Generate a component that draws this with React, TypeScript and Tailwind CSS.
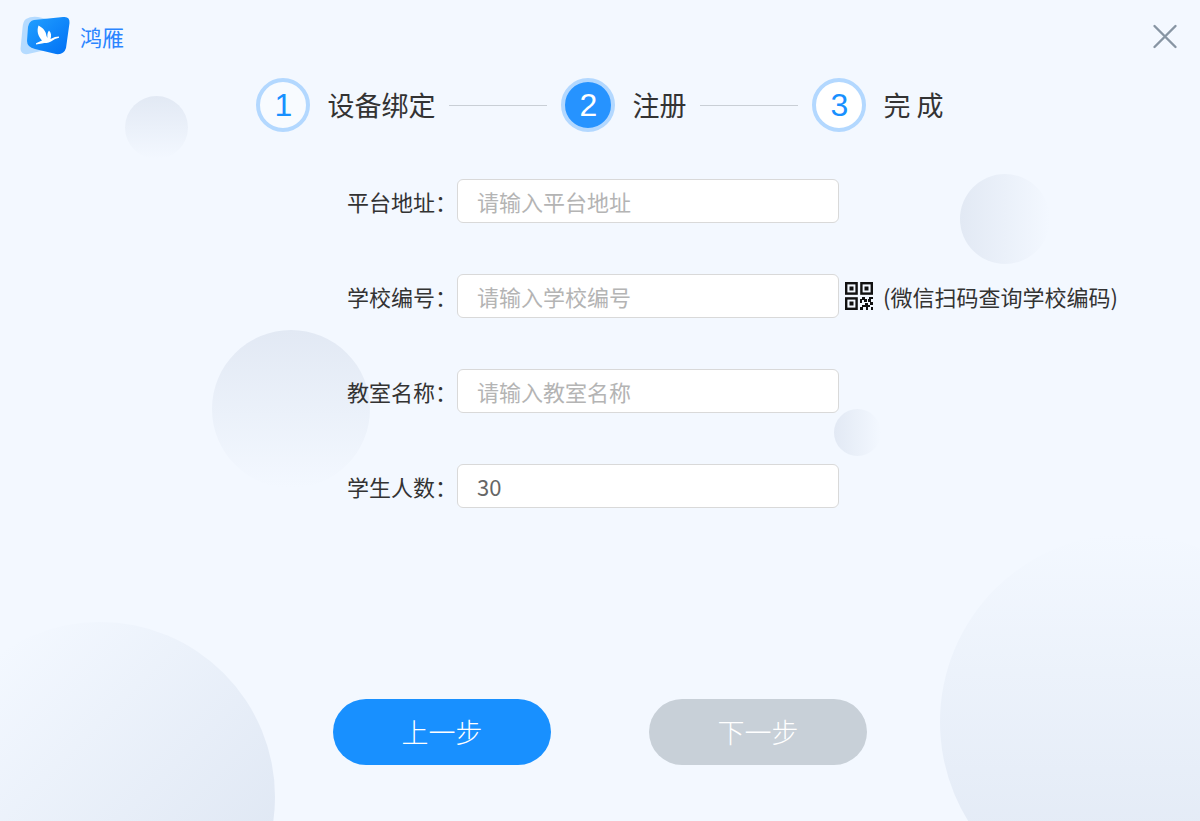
import { Fragment, useState } from 'react'
import clsx from 'clsx'

type Step = { no: number; title: string }

type Field = {
  id: string
  label: string
  placeholder: string
  value: string
  hint?: string
}

const STEPS: Step[] = [
  { no: 1, title: '设备绑定' },
  { no: 2, title: '注册' },
  { no: 3, title: '完 成' },
]

const CURRENT_STEP = 2

const FIELDS: Field[] = [
  { id: 'platform', label: '平台地址', placeholder: '请输入平台地址', value: '' },
  { id: 'school', label: '学校编号', placeholder: '请输入学校编号', value: '', hint: '(微信扫码查询学校编码)' },
  { id: 'classroom', label: '教室名称', placeholder: '请输入教室名称', value: '' },
  { id: 'students', label: '学生人数', placeholder: '请输入学生人数', value: '30' },
]

function Logo() {
  return (
    <svg width="50" height="40" viewBox="0 0 50 40" aria-hidden="true">
      <defs>
        <linearGradient id="logo-bg" x1="0" y1="0" x2="1" y2="1">
          <stop offset="0" stopColor="#22a0ff" />
          <stop offset="1" stopColor="#0070f5" />
        </linearGradient>
      </defs>
      <path d="M6 3 Q11 0 18 1 L36 5 L30 33 L8 38 Q1 39 0.500 33 L2.500 12 Q3 5 6 3Z" fill="#b5dbff" />
      <path d="M14 4 L43 1 Q50 0 49.500 7 L46 32 Q44 39 36 38 L15 33 Q7 31 7 25 L8 11 Q9 5 14 4Z" fill="url(#logo-bg)" />
      <path
        d="M18.500 9.500 C23 12 26 15 26.500 20 L27.500 22 C27 19 27.500 16 29 14.500 C31.500 17 31.500 20 30.500 23 L35 21 L39 20.500 L39 21.800 L35 23 L31 25.500 C28 27.500 25 26.500 22 27.500 L16 28.500 L16 27.300 L22 24.500 C18 20 16.500 15 18.500 9.500Z"
        fill="#fff"
      />
    </svg>
  )
}

function QrIcon() {
  return (
    <svg width="28" height="28" viewBox="0 0 28 28" className="shrink-0" role="img" aria-label="二维码">
      <g fill="none" stroke="#111" strokeWidth="2.400">
        <rect x="1.200" y="1.200" width="10.400" height="10.400" />
        <rect x="16.400" y="1.200" width="10.400" height="10.400" />
        <rect x="1.200" y="16.400" width="10.400" height="10.400" />
      </g>
      <g fill="#111">
        <rect x="4.500" y="4.500" width="4" height="4" />
        <rect x="19.500" y="4.500" width="4" height="4" />
        <rect x="4.500" y="19.500" width="4" height="4" />
        <path d="M17 15h3v2h2v3h-3v-2h-2v3h-2v-4h2zM24 15h4v2h-2v3h2v3h-3v-3h-2v-3h1zM20 21h3v2h2v2h-2v3h-2v-3h-3v3h-3v-3h2v-2h3zM26 25h2v3h-2z" />
      </g>
    </svg>
  )
}

// 背景装饰圆
function Bubbles() {
  return (
    <div className="pointer-events-none absolute inset-0 -z-10 overflow-hidden" aria-hidden="true">
      <div className="absolute left-[125px] top-24 size-[63px] rounded-full bg-linear-to-b from-[#e2e9f4] to-[#f3f8ff]" />
      <div className="absolute right-[150px] top-[174px] size-[90px] rounded-full bg-linear-to-r from-[#e2e9f4] to-[#f3f8ff]" />
      <div className="absolute left-[212px] top-[330px] size-[158px] rounded-full bg-linear-to-b from-[#e2e9f4] to-[#f3f8ff]" />
      <div className="absolute right-[319px] top-[409px] size-[47px] rounded-full bg-linear-to-r from-[#e2e9f4] to-[#f3f8ff]" />
      <div className="absolute -bottom-[151px] -left-[75px] size-[350px] rounded-full bg-linear-to-br from-[#f3f8ff] from-15% to-[#e0e8f4] to-80%" />
      <div className="absolute -bottom-[89px] -right-[116px] size-[376px] rounded-full bg-linear-to-b from-[#f3f8ff] to-[#e0e8f4]" />
    </div>
  )
}

function Steps() {
  return (
    <ol className="flex items-center justify-center">
      {STEPS.map((step, i) => (
        <Fragment key={step.no}>
          {i > 0 && <li aria-hidden="true" className="mx-3.5 h-px w-[98px] bg-[#c9cfd6]" />}
          <li className="flex items-center gap-[17px]" aria-current={step.no === CURRENT_STEP ? 'step' : undefined}>
            <span
              className={clsx(
                'flex size-[54px] items-center justify-center rounded-full border-4 border-[#b3d8ff] font-["Liberation_Sans",Arial,sans-serif] text-[32px] leading-none',
                step.no === CURRENT_STEP && 'bg-[#2693ff] text-white',
                step.no < CURRENT_STEP && 'bg-[#f8fbff] text-[#1890ff]',
                step.no > CURRENT_STEP && 'bg-white text-[#1890ff]',
              )}
            >
              {step.no}
            </span>
            <span className="whitespace-nowrap text-[27px] font-normal leading-10 text-[#333]">{step.title}</span>
          </li>
        </Fragment>
      ))}
    </ol>
  )
}

export default function App() {
  const [values, setValues] = useState<Record<string, string>>(
    () => Object.fromEntries(FIELDS.map(f => [f.id, f.value])),
  )

  return (
    <div className='relative isolate flex min-h-screen flex-col bg-[#f3f8ff] font-["Noto_Sans_CJK_SC",sans-serif] font-light'>
      <Bubbles />

      <header className="flex items-start justify-between pl-5 pr-[22px] pt-4">
        <div className="flex h-10 items-center gap-2.5">
          <Logo />
          <span className="text-[22px] font-normal leading-8 text-[#2b85ff]">鸿雁</span>
        </div>
        <button type="button" aria-label="关闭" className="mt-2 cursor-pointer">
          <svg width="26" height="26" viewBox="0 0 26 26" aria-hidden="true">
            <path d="M2.500 2 L23.500 23 M23.500 2 L2.500 23" stroke="#8795a3" strokeWidth="2.400" strokeLinecap="round" />
          </svg>
        </button>
      </header>

      <main className="flex flex-1 flex-col pt-[22px]">
        <Steps />

        <form className="flex flex-1 flex-col" onSubmit={e => e.preventDefault()}>
          <div className="mt-[47px] flex flex-col gap-[51px] pl-24">
            {FIELDS.map(field => (
              <div key={field.id} className="grid grid-cols-[1fr_382px_1fr] items-center">
                <label htmlFor={field.id} className="whitespace-nowrap text-right text-[22px] font-normal leading-8 text-[#333]">
                  {field.label}：
                </label>
                <input
                  id={field.id}
                  type="text"
                  value={values[field.id]}
                  placeholder={field.placeholder}
                  onChange={e => setValues({ ...values, [field.id]: e.target.value })}
                  className="h-11 w-full rounded-md border border-[#d9d9d9] bg-white px-[19px] text-[22px] font-normal text-[#666] outline-none placeholder:text-[#b4b4b4] focus:border-[#1890ff]"
                />
                {field.hint && (
                  <div className="flex items-center gap-2.5 pl-1.5">
                    <QrIcon />
                    <span className="whitespace-nowrap text-[22px] font-normal leading-8 text-[#333]">{field.hint}</span>
                  </div>
                )}
              </div>
            ))}
          </div>

          <div className="mt-auto flex justify-center gap-[98px] pb-14 pt-12">
            <button type="button" className="h-[66px] w-[218px] cursor-pointer rounded-full bg-[#1890ff] text-[27px] text-white">
              上一步
            </button>
            <button type="submit" disabled className="h-[66px] w-[218px] rounded-full bg-[#c8d0d8] text-[27px] text-white">
              下一步
            </button>
          </div>
        </form>
      </main>
    </div>
  )
}
